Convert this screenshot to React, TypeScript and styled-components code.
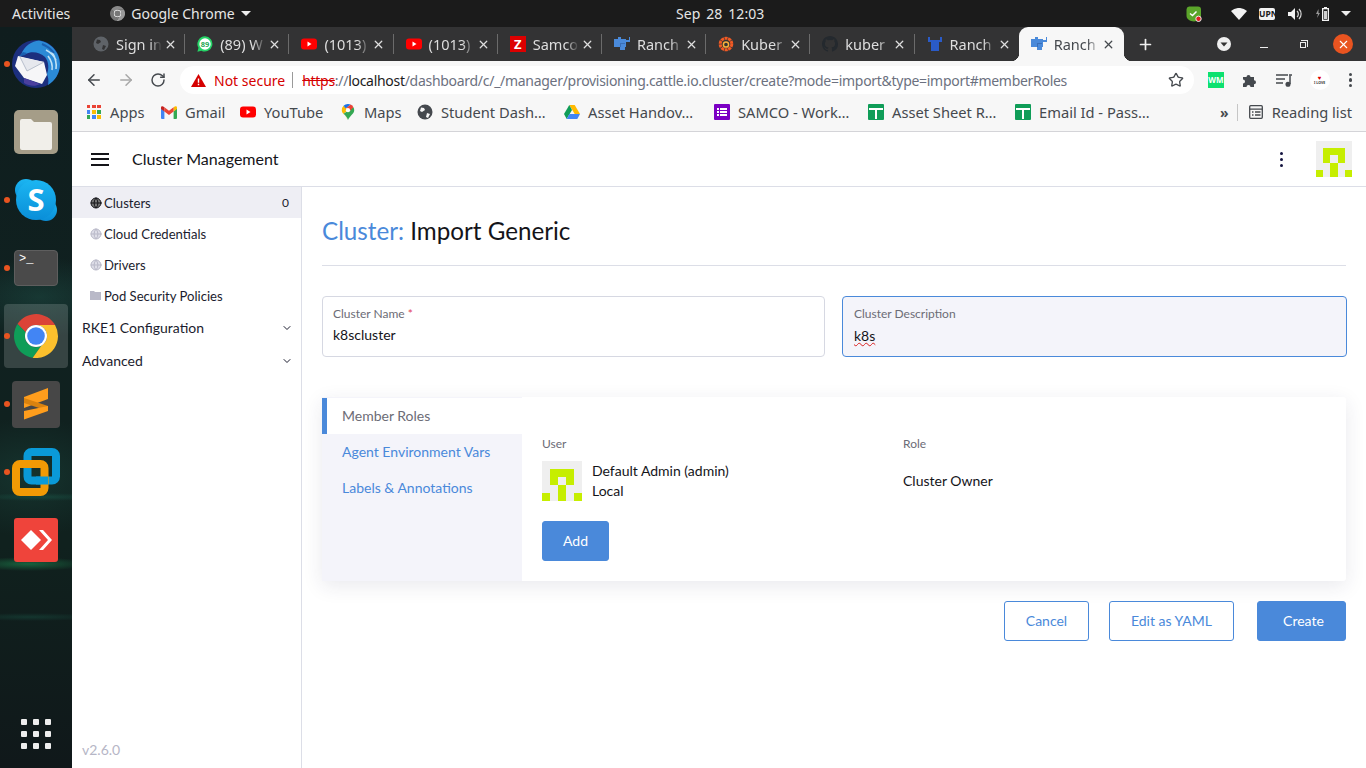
import React from "react";
import styled, { createGlobalStyle } from "styled-components";
import { ArrowLeft, ArrowRight, RotateCw, Star, X, Plus, ChevronDown, Globe } from "lucide-react";

const UI = `"Noto Sans", "Open Sans", sans-serif`;
const APP = `Lato, "Noto Sans", sans-serif`;
const BLUE = "#4a89da";

const Global = createGlobalStyle`
  html, body { margin: 0; padding: 0; width: 1366px; height: 768px; overflow: hidden; background: #fff; }
  * { box-sizing: border-box; }
`;

const Screen = styled.div`
  width: 1366px; height: 768px; display: flex; flex-direction: column; overflow: hidden; font-family: ${UI};
`;
const TopBar = styled.header`
  height: 27px; flex: none; background: #1b1b1b; color: #e6e6e6; display: grid;
  grid-template-columns: 664px auto 1fr; align-items: center; font-size: 14px; padding: 0 15px 0 12px;
`;
const TopLeft = styled.div`display: flex; align-items: center;`;
const AppName = styled.div`display: flex; align-items: center; gap: 6px; margin-left: 40px;`;
const Caret = styled.span`
  width: 0; height: 0; border-left: 5px solid transparent; border-right: 5px solid transparent; border-top: 5px solid #eee;
`;
const Clock = styled.div`word-spacing: 2px; letter-spacing: .1px;`;
const TopRight = styled.div`display: flex; justify-content: flex-end; align-items: center; gap: 13px;`;
const ShieldWrap = styled.span`display: flex; margin-right: 16px;`;
const Vpn = styled.span`
  background: #f2f2f2; color: #1b1b1b; border-radius: 2px; font: 700 8.5px/12px ${UI}; width: 16px; text-align: center; height: 12px; display: block; margin-left: -1px;
`;
const LastCaret = styled.span`display: flex; margin-left: -2px;`;

const Body = styled.div`flex: 1; display: flex; min-height: 0;`;
const Dock = styled.nav`
  width: 72px; flex: none; position: relative; padding-top: 3px; display: flex; flex-direction: column;
  background:
    radial-gradient(ellipse 60px 7px at 28px 537px, rgba(28,125,75,.7), transparent),
    radial-gradient(ellipse 70px 4px at 40px 470px, rgba(30,110,90,.35), transparent),
    radial-gradient(ellipse 70px 4px at 30px 590px, rgba(30,110,90,.3), transparent),
    radial-gradient(ellipse 90px 40px at 40px 270px, rgba(34,90,80,.4), transparent),
    radial-gradient(ellipse 90px 60px at 30px 450px, rgba(30,80,70,.4), transparent),
    linear-gradient(180deg, #0f1d1e 0%, #102120 40%, #10211e 70%, #10181a 100%);
`;
const Slot = styled.div<{ $active?: boolean; $dot?: boolean }>`
  height: 68px; flex: none; display: flex; align-items: center; justify-content: center; position: relative;
  ${p => p.$active ? `&::before { content: ""; position: absolute; left: 4px; top: 2px; width: 64px; height: 64px; border-radius: 4px; background: rgba(255,255,255,.16);} ` : ""}
  ${p => p.$dot ? `&::after { content: ""; position: absolute; left: 4px; top: 31px; width: 6px; height: 6px; border-radius: 50%; background: #e95420;} ` : ""}
  svg, div { position: relative; }
`;
const Terminal = styled.div`
  width: 44px; height: 36px; border-radius: 4px; background: #4a4a4a; border: 1px solid #5e5e5e; color: #fff;
  font: 400 12px/12px "Liberation Mono", monospace; padding: 2px 0 0 4px;
`;
const Grid9 = styled.div`
  position: absolute; left: 21px; bottom: 19px; width: 30px; display: grid; grid-template-columns: repeat(3, 6px); gap: 6px;
  i { width: 6px; height: 6px; background: #eee; border-radius: 1px; display: block; }
`;

const Browser = styled.div`flex: 1; min-width: 0; display: flex; flex-direction: column;`;
const TabStrip = styled.div`
  height: 34px; flex: none; background: #333334; padding: 0 0 0 9px; display: flex; align-items: stretch; color: #dedede;
`;
const Tab = styled.div<{ $active?: boolean; $last?: boolean }>`
  width: 104.2px; flex: none; display: flex; align-items: center; padding: 0 0 0 12px; position: relative; font-size: 14.5px;
  ${p => p.$active ? `
    background: #f7f7f7; color: #45494e; border-radius: 9px 9px 0 0; width: 105px;
    &::before, &::after { content: ""; position: absolute; bottom: 0; width: 8px; height: 8px; }
    &::before { left: -8px; background: radial-gradient(circle at 0 0, transparent 8px, #f7f7f7 8.5px); }
    &::after { right: -8px; background: radial-gradient(circle at 100% 0, transparent 8px, #f7f7f7 8.5px); }
  ` : p.$last ? "" : `
    &::after { content: ""; position: absolute; right: 0; top: 7px; height: 20px; width: 1px; background: #6b6b6b; }
  `}
`;
const TabTitle = styled.span`
  width: 46px; margin-left: 7px; overflow: hidden; white-space: nowrap; flex: none;
  -webkit-mask-image: linear-gradient(90deg, #000 72%, transparent 100%); mask-image: linear-gradient(90deg, #000 72%, transparent 100%);
`;
const TabClose = styled.span`margin-left: 2px; display: flex;`;
const StripRight = styled.div`flex: 1; display: flex; align-items: center; padding-left: 13px; color: #f0f0f0;`;
const WinBtns = styled.div`margin-left: auto; display: flex; align-items: center; padding-right: 3px;`;
const WinSlot = styled.span`width: 39.700px; display: flex; align-items: center; justify-content: center;`;
const CloseWin = styled.span`
  width: 20px; height: 20px; border-radius: 50%; background: #e95420; display: flex; align-items: center; justify-content: center; color: #fff;
`;
const Minimize = styled.span`width: 8px; height: 1px; background: #eee; display: block; margin-top: 7px;`;
const Restore = styled.span`
  width: 6px; height: 6px; border: 1px solid #eee; display: block; position: relative; margin-top: 2px;
  &::before { content: ""; position: absolute; right: -3px; top: -3px; width: 6px; height: 6px; border-top: 1px solid #eee; border-right: 1px solid #eee; }
`;

const Toolbar = styled.div`
  height: 37px; flex: none; background: #f7f7f7; display: flex; align-items: center; padding: 1px 0 0 12px; color: #45494e;
`;
const NavBtn = styled.span<{ $off?: boolean }>`
  width: 20px; margin-right: 12px; display: flex; justify-content: center; color: ${p => p.$off ? "#a8a8a8" : "#45494e"};
`;
const Omni = styled.div`
  width: 1014px; height: 28px; flex: none; background: #fff; border-radius: 14px; display: flex; align-items: center;
  padding: 0 10px 0 11px; font-size: 14px; white-space: nowrap;
`;
const NotSecure = styled.span`color: #d50000; margin-left: 8px;`;
const Divider = styled.span`width: 1px; height: 16px; background: #9a9a9a; margin: 0 9px 0 7px; flex: none;`;
const Url = styled.span`color: #6c7180; flex: 1; overflow: hidden; letter-spacing: -.29px;`;
const Strike = styled.span`color: #d50000; text-decoration: line-through;`;
const Host = styled.span`color: #1c1c1c;`;
const Tools = styled.div`
  flex: 1; display: flex; align-items: center; justify-content: space-between; padding: 0 13px 0 14px;
`;
const Wm = styled.span`
  width: 16px; height: 16px; background: #0de16f; color: #fff; font: 700 8px/16px ${UI}; text-align: center; display: block;
`;
const Badge = styled.span`
  width: 20px; height: 20px; background: #fff; border-radius: 50%; color: #333; display: flex; flex-direction: column; align-items: center; justify-content: center; font: 700 3.5px/4px ${UI};
`;
const Heart = styled.span`color: #d00; font-size: 6px; line-height: 6px;`;
const Dots = styled.span`
  display: flex; flex-direction: column; gap: 2px; padding: 0 1px;
  i { width: 3.5px; height: 3.5px; background: #45494e; border-radius: 50%; display: block; }
`;

const Bookmarks = styled.div`
  height: 34px; flex: none; background: #f7f7f7; border-bottom: 1px solid #d4d4d8; display: flex; align-items: center; font-size: 14.7px; color: #45494e; padding: 0 14px 5px 14px; white-space: nowrap;
`;
const Mark = styled.span<{ $w: number }>`
  width: ${p => p.$w}px; flex: none; display: flex; align-items: center; gap: 8px;
`;
const MarkIcon = styled.span`width: 16px; height: 16px; flex: none; display: flex; align-items: center; justify-content: center;`;
const MarksRight = styled.div`margin-left: auto; display: flex; align-items: center;`;
const Chevrons = styled.span`font-size: 14px; font-weight: 700; margin-right: 8px;`;
const MarkSep = styled.span`width: 1px; height: 17px; background: #c6c6c6; margin-right: 10px;`;
const MarkLabel = styled.span`margin-left: 8px;`;

const Rancher = styled.div`flex: 1; min-height: 0; display: flex; flex-direction: column; background: #fff; font-family: ${APP}; color: #141419;`;
const AppHeader = styled.div`
  height: 55px; flex: none; border-bottom: 1px solid #dcdee7; display: flex; align-items: center; padding: 0 14px 0 19px;
`;
const Burger = styled.span`
  width: 18px; display: flex; flex-direction: column; gap: 3.5px;
  i { height: 2px; background: #141419; display: block; }
`;
const AppTitle = styled.div`font-size: 16.050px; margin: 0 0 2px 23px;`;
const HeadRight = styled.div`margin-left: auto; display: flex; align-items: center; gap: 33px;`;
const Kebab = styled.span`
  display: flex; flex-direction: column; gap: 3px;
  i { width: 3px; height: 3px; background: #141440; border-radius: 50%; display: block; }
`;
const Columns = styled.div`flex: 1; min-height: 0; display: flex;`;
const Side = styled.aside`
  width: 230px; flex: none; border-right: 1px solid #dcdee7; display: flex; flex-direction: column; font-size: 14px;
`;
const NavRow = styled.div<{ $active?: boolean }>`
  height: 31px; flex: none; display: flex; align-items: center; padding: 0 12px 0 18px; font-size: 13.100px;
  background: ${p => p.$active ? "#eeeef4" : "transparent"}; color: #1b1c2e;
`;
const NavIcon = styled.span`width: 14px; display: flex; flex: none;`;
const Count = styled.span`margin-left: auto; font-size: 12px;`;
const Group = styled.div`
  height: 33px; flex: none; display: flex; align-items: center; justify-content: space-between; padding: 0 8px 0 10px; font-size: 14px; color: #1b1c2e;
`;
const Version = styled.div`margin-top: auto; padding: 0 0 10px 10px; color: #b6b6c6; font-size: 14px;`;

const Main = styled.main`flex: 1; min-width: 0; padding: 20px 20px 0;`;
const TitleBar = styled.div`height: 59px; border-bottom: 1px solid #dcdee7; padding-top: 9px;`;
const H1 = styled.h1`
  margin: 0; font: 400 24.200px/30px ${APP}; color: #141419;
  span { color: ${BLUE}; }
`;
const Fields = styled.div`display: grid; grid-template-columns: 503px 505px; gap: 17px; margin: 30px 0 40px; width: 1025px;`;
const Field = styled.div<{ $focus?: boolean }>`
  height: 61px; border: 1px solid ${p => p.$focus ? BLUE : "#d6d8e2"}; border-radius: 4px; padding: 9px 10px 0 ${p => p.$focus ? 11 : 10}px;
  background: ${p => p.$focus ? "#f4f4fa" : "#fff"};
`;
const FieldLabel = styled.label`
  display: block; font-size: 12px; line-height: 16px; color: #6c6c76;
  em { color: #e2425a; font-style: normal; }
`;
const FieldValue = styled.div<{ $focus?: boolean }>`font-size: 14px; line-height: 18px; margin-top: ${p => p.$focus ? 5 : 4}px; color: #141419;`;
const Squiggle = styled.span`text-decoration: underline wavy #d92020 1px; text-underline-offset: 1px;`;

const Panel = styled.section`
  height: 184px; display: flex; box-shadow: 0 5px 20px rgba(40,40,80,.10); border-radius: 3px; background: #fff;
`;
const SideTabs = styled.div`width: 200px; flex: none; background: #f4f4fa; padding-top: 1px; font-size: 14px;`;
const SideTab = styled.div<{ $active?: boolean }>`
  height: 36px; display: flex; align-items: center; padding-bottom: 2px;
  padding-left: ${p => p.$active ? "15px" : "20px"};
  border-left: ${p => p.$active ? `5px solid ${BLUE}` : "none"};
  background: ${p => p.$active ? "#fff" : "transparent"};
  color: ${p => p.$active ? "#6c6c76" : BLUE};
`;
const PanelBody = styled.div`flex: 1; min-width: 0; padding: 40px 20px 20px;`;
const RoleGrid = styled.div`display: grid; grid-template-columns: 361px 1fr; align-items: center;`;
const ColHead = styled.div`font-size: 12px; line-height: 14px; color: #6c6c76; margin-bottom: 10px;`;
const UserCell = styled.div`display: flex; align-items: center; gap: 10px; font-size: 14px; line-height: 20px;`;
const RoleCell = styled.div`font-size: 14px; padding-bottom: 2px;`;
const Btn = styled.button<{ $solid?: boolean; $w?: number; $nudge?: number }>`
  height: 40px; border-radius: 3px; font: 400 14px ${APP}; width: ${p => p.$w}px; padding: 0 0 2px ${p => p.$nudge ?? 0}px; cursor: pointer;
  border: 1px solid ${BLUE}; background: ${p => p.$solid ? BLUE : "#fff"}; color: ${p => p.$solid ? "#fff" : BLUE};
`;
const AddBtn = styled(Btn)`margin-top: 20px; display: block;`;
const Footer = styled.div`display: flex; justify-content: flex-end; margin-top: 20px;`;
const FootGap = styled.span<{ $w: number }>`width: ${p => p.$w}px; flex: none;`;

const Identicon = ({ size }: { size: number }) => (
  <svg width={size} height={size} viewBox="0 0 5 5" shapeRendering="crispEdges">
    <rect width="5" height="5" fill="#efefef" />
    <path d="M1 1h3v2H3V2H2v1H1z M2 3h1v2H2z M0 4h1v1H0z M4 4h1v1H4z" fill="#c6ee00" />
  </svg>
);

const RancherFav = () => (
  <svg width="16" height="16" viewBox="0 0 16 16" shapeRendering="crispEdges">
    <path d="M0 3h4V1h3v2h5v8H11v3H6v-3H0z" fill="#4a8ada" />
    <path d="M12 4h3V1h1v5h-4z" fill="#4a8ada" />
    <path d="M6 7h5v1H6zM6 8h1v3H6z" fill="#3a6fb8" />
  </svg>
);
const DarkRancher = () => (
  <svg width="16" height="16" viewBox="0 0 16 16">
    <path d="M1 1h2v3h10V1h2v5h-3v9H4V6H1z" fill="#2a5bc8" />
  </svg>
);
const Wa = () => (
  <svg width="16" height="16" viewBox="0 0 16 16">
    <path d="M8 .3a7.600 7.600 0 0 0-6.500 11.500L.4 15.700l4-1A7.600 7.600 0 1 0 8 .3z" fill="#25d366" />
    <circle cx="8" cy="8" r="5.700" fill="#fff" />
    <text x="8" y="10.600" textAnchor="middle" fontSize="7.500" fontWeight="700" fill="#1fa855" fontFamily="Noto Sans">89</text>
  </svg>
);
const Yt = () => (
  <svg width="16" height="12" viewBox="0 0 16 12">
    <rect width="16" height="11" y=".5" rx="3" fill="#f00" />
    <path d="M6.500 3.500l4 2.500-4 2.500z" fill="#fff" />
  </svg>
);
const Zed = styled.span`
  width: 16px; height: 16px; background: #d00; color: #fff; font: 700 13px/16px ${UI}; text-align: center; display: block; flex: none;
`;
const Grafana = () => (
  <svg width="16" height="16" viewBox="0 0 16 16">
    <circle cx="8" cy="8" r="5.800" fill="none" stroke="#f15a24" strokeWidth="3" strokeDasharray="3 .6" />
    <circle cx="8" cy="8.500" r="2.600" fill="none" stroke="#fbb03b" strokeWidth="1.500" />
  </svg>
);
const GitHub = () => (
  <svg width="16" height="16" viewBox="0 0 16 16">
    <path fill="#24292e" d="M8 0C3.580 0 0 3.580 0 8c0 3.540 2.290 6.530 5.470 7.590.4.070.55-.17.55-.38v-1.340c-2.230.48-2.700-1.070-2.700-1.070-.36-.93-.89-1.170-.89-1.170-.73-.5.050-.49.050-.49.8.060 1.230.83 1.230.83.710 1.220 1.870.87 2.330.66.070-.52.28-.87.5-1.070-1.780-.2-3.640-.89-3.640-3.950 0-.87.31-1.590.82-2.150-.08-.2-.36-1.020.08-2.120 0 0 .67-.21 2.200.82a7.600 7.600 0 0 1 4 0c1.530-1.040 2.200-.82 2.200-.82.44 1.100.16 1.920.08 2.120.51.56.82 1.270.82 2.150 0 3.070-1.870 3.750-3.650 3.950.29.25.54.73.54 1.480v2.200c0 .21.15.46.55.38A8 8 0 0 0 16 8c0-4.420-3.580-8-8-8z" />
  </svg>
);
const GlobeFav = ({ c = "#5f6368", bg = "#333334" }: { c?: string; bg?: string }) => (
  <svg width="16" height="16" viewBox="0 0 16 16">
    <circle cx="8" cy="8" r="7.500" fill={c} />
    <path d="M4 3.500l3 .5 1 2-3 2-2-1zM10 9l3 1-2 4-2-1z" fill={bg} />
  </svg>
);
const Apps = () => (
  <svg width="14" height="14" viewBox="0 0 14 14" shapeRendering="crispEdges">
    {["#ea4335","#ea4335","#ea4335","#4285f4","#fbbc04","#34a853","#34a853","#4285f4","#fbbc04"].map((c, i) => (
      <rect key={i} x={(i % 3) * 5.200} y={Math.floor(i / 3) * 5.200} width="3.400" height="3.400" fill={c} />
    ))}
  </svg>
);
const Gmail = () => (
  <svg width="16" height="13" viewBox="0 0 16 13">
    <path d="M0 2v10a1 1 0 0 0 1 1h2.400V5.500z" fill="#4285f4" />
    <path d="M16 2v10a1 1 0 0 1-1 1h-2.400V5.500z" fill="#34a853" />
    <path d="M12.600 1.200V5.600L16 3V1.500A1.400 1.400 0 0 0 13.800.4z" fill="#fbbc04" />
    <path d="M3.400 5.600V1.200L8 4.700l4.600-3.500v4.400L8 9z" fill="#ea4335" />
    <path d="M3.400 1.200V5.600L0 3V1.500A1.400 1.400 0 0 1 2.200.4z" fill="#c5221f" />
  </svg>
);
const MapsPin = () => (
  <svg width="14" height="16" viewBox="0 0 14 18">
    <path d="M7 18C5 13 0 11 0 7a7 7 0 0 1 2-5l5 5-5 4z" fill="#fbbc04" />
    <path d="M7 18c2-5 7-7 7-11a7 7 0 0 0-.9-3.400L2 11c2 2 4 4 5 7z" fill="#34a853" />
    <path d="M2 2a7 7 0 0 1 5-2 7 7 0 0 1 3 .7L4.500 5z" fill="#1a73e8" />
    <path d="M10 .7A7 7 0 0 1 13.100 3.600L9 8 5 4.500z" fill="#ea4335" />
    <circle cx="7" cy="7" r="2.400" fill="#fff" />
  </svg>
);
const Drive = () => (
  <svg width="16" height="14" viewBox="0 0 16 14">
    <path d="M5.300 0h5.400l5.300 9h-5.300z" fill="#ffba00" />
    <path d="M5.300 0L0 9l2.700 5 5.300-9z" fill="#0f9d58" />
    <path d="M2.700 14h10.600L16 9H5.400z" fill="#4285f4" />
  </svg>
);
const FormIcon = () => (
  <svg width="16" height="16" viewBox="0 0 16 16">
    <rect width="16" height="16" rx="1" fill="#7b00c4" />
    <path d="M3 4h2v2H3zM3 7h2v2H3zM3 10h2v2H3zM6 4h7v2H6zM6 7h7v2H6zM6 10h7v2H6z" fill="#fff" />
  </svg>
);
const SheetIcon = () => (
  <svg width="16" height="16" viewBox="0 0 16 16">
    <rect width="16" height="16" rx="1" fill="#0f9d58" />
    <path d="M1 4h14v2H9v9H7V6H1z" fill="#fff" />
  </svg>
);
const ReadingIcon = () => (
  <svg width="14" height="14" viewBox="0 0 14 14" fill="none" stroke="#45494e" strokeWidth="1.300">
    <rect x=".7" y=".7" width="12.600" height="12.600" rx="1" />
    <path d="M.7 4.200h12.600M3 7h1.500M6 7h5.500M3 10h1.500M6 10h5.500" />
  </svg>
);
const Alert = () => (
  <svg width="15" height="13" viewBox="0 0 15 13">
    <path d="M7.500 0L15 13H0z" fill="#d50000" />
    <path d="M6.800 4.500h1.400v4.200H6.800zM6.800 9.800h1.400v1.400H6.800z" fill="#fff" />
  </svg>
);
const Puzzle = () => (
  <svg width="16" height="16" viewBox="0 0 16 16">
    <path fill="#45494e" d="M1 5h3.500a2 2 0 1 1 4 0H12v3.200a2 2 0 1 1 0 4V15H8.500a2 2 0 1 0-4 0H1v-3.500a2 2 0 1 0 0-4z" />
  </svg>
);
const Queue = () => (
  <svg width="16" height="14" viewBox="0 0 16 14" fill="none" stroke="#45494e" strokeWidth="1.500">
    <path d="M0 2h12M0 6h9M0 10h7" />
    <path d="M14 2.500V11" />
    <circle cx="12" cy="11.300" r="1.800" fill="#45494e" />
    <path d="M13 2h3" />
  </svg>
);
const ShieldOk = () => (
  <svg width="16" height="16" viewBox="0 0 16 16">
    <path d="M3 .5h9a3 3 0 0 1 3 3v6c0 3-3 5.500-7 6-4-.5-7.500-2-7.500-6v-6A3 3 0 0 1 3 .5z" fill="#5ba52a" />
    <path d="M4 7.500l2.500 2L10.500 5.500" stroke="#fff" strokeWidth="1.500" fill="none" />
    <circle cx="12.500" cy="12.800" r="2.700" fill="#e02020" stroke="#eee" strokeWidth="1" />
  </svg>
);
const Wifi = () => (
  <svg width="16" height="12" viewBox="0 0 16 12">
    <path d="M8 12L0 3a12 12 0 0 1 16 0z" fill="#f2f2f2" />
  </svg>
);
const Speaker = () => (
  <svg width="15" height="14" viewBox="0 0 15 14" fill="none">
    <path d="M0 5h3l4-4v12L3 9H0z" fill="#f2f2f2" />
    <path d="M9 4a4 4 0 0 1 0 6M11 2a7 7 0 0 1 0 10" stroke="#d8d8d8" strokeWidth="1.200" />
  </svg>
);
const Battery = () => (
  <svg width="14" height="15" viewBox="0 0 14 15">
    <path d="M2.500 3L0 8h2l-1 4 3-5H2.500z" fill="#9a9a9a" />
    <path d="M8 1h3v1h2v13H6V2h2z" fill="#f2f2f2" />
    <rect x="7.300" y="3.300" width="4.400" height="10.400" fill="#1b1b1b" />
    <rect x="8" y="5" width="3" height="8" fill="#cfcfcf" />
  </svg>
);
const ChromeLogo = ({ size, mono }: { size: number; mono?: boolean }) => (
  <svg width={size} height={size} viewBox="4 4 40 40">
    <path d="M7.200 13.200A20 20 0 0 1 41.300 14H24a10 10 0 0 0-9.400 6.600Z" fill={mono ? "#8a8a8a" : "#db4437"} />
    <path d="M7.200 13.200A20 20 0 0 0 21 43.800L29 32.700A10 10 0 0 1 14.600 20.600Z" fill={mono ? "#777" : "#0f9d58"} />
    <path d="M41.300 14A20 20 0 0 1 21 43.800L29 32.700A10 10 0 0 0 24 14Z" fill={mono ? "#9a9a9a" : "#fbc02d"} />
    <circle cx="24" cy="24" r="10" fill="#fff" />
    <circle cx="24" cy="24" r="8" fill={mono ? "#777" : "#4285f4"} />
  </svg>
);
const Thunderbird = () => (
  <svg width="48" height="48" viewBox="0 0 48 48">
    <circle cx="24" cy="24" r="24" fill="#1c2f7e" />
    <path d="M9 15C12 6 20 1 27 .5 38 2 48 12 48 24c0 9-5 17-12 21 1-5 0-8-1-11 2-5 2-12-2-17-5-5-14-6-19-3z" fill="#2b8ad6" />
    <path d="M36 16c3 4 5 8 4 14M40 12c3 5 5 10 4 17M34 10c4 2 8 6 10 10" stroke="#bfe2f7" strokeWidth="1.600" fill="none" />
    <path d="M30 4c5 2 9 5 12 9" stroke="#1a5fb0" strokeWidth="2" fill="none" />
    <path d="M6 17l5-5 4 1L13 15z" fill="#1a5fb0" />
    <path d="M6 16l26 6 3 13-5 9-18-6-9-12z" fill="#f6f6f8" />
    <path d="M8 17l7 14 17-9" fill="#e6e8ee" stroke="#a9b2c2" strokeWidth=".8" />
    <path d="M12 38l16 6c-5 3-11 2-16-1z" fill="#4a3f9e" />
  </svg>
);
const Files = () => (
  <svg width="44" height="44" viewBox="0 0 44 44">
    <rect width="44" height="44" rx="5" fill="#a59d88" />
    <path d="M6 11a2 2 0 0 1 2-2h9l3 3h16a2 2 0 0 1 2 2v24a2 2 0 0 1-2 2H8a2 2 0 0 1-2-2z" fill="#f1efea" />
  </svg>
);
const Skype = () => (
  <svg width="44" height="44" viewBox="0 0 44 44">
    <defs>
      <linearGradient id="sk" x1="0" y1="0" x2="0" y2="1">
        <stop offset="0" stopColor="#1bb6f2" />
        <stop offset="1" stopColor="#0a8ed8" />
      </linearGradient>
    </defs>
    <circle cx="12" cy="12" r="11" fill="url(#sk)" />
    <circle cx="32" cy="32" r="11" fill="url(#sk)" />
    <circle cx="22" cy="22" r="20" fill="url(#sk)" />
    <text x="22" y="33" textAnchor="middle" fontSize="31" fontWeight="700" fill="#fff" fontFamily="Noto Sans">S</text>
  </svg>
);
const Sublime = () => (
  <svg width="48" height="47" viewBox="0 0 48 47">
    <rect width="48" height="47" rx="4" fill="#474747" />
    <path d="M12 16L36 7v11L12 27z" fill="#ff9d1c" />
    <path d="M12 17l24 8v5L12 22z" fill="#d9820f" />
    <path d="M12 30l24-5v5L12 38.500z" fill="#ff9d1c" />
  </svg>
);
const Vmware = () => (
  <svg width="48" height="48" viewBox="0 0 48 48" fill="none" strokeWidth="8">
    <rect x="15.500" y="4" width="28.500" height="28.500" rx="4" stroke="#0a9ad8" />
    <rect x="4" y="16" width="28.500" height="28" rx="4" stroke="#f29a05" />
    <path d="M24 32.500h12" stroke="#0a9ad8" />
  </svg>
);
const AnyDesk = () => (
  <svg width="44" height="44" viewBox="0 0 44 44">
    <rect width="44" height="44" rx="3" fill="#ef443b" />
    <path d="M7 22l10-10 10 10-10 10z" fill="#fff" />
    <path d="M25 12h4l9 10-9 10h-4l9-10z" fill="#fff" />
  </svg>
);

const Hash = ({ dark }: { dark?: boolean }) => (
  <Globe size={12} color={dark ? "#141419" : "#b9b9c8"} fill={dark ? "#777" : "#dedee8"} strokeWidth={2} />
);
const Folder = () => (
  <svg width="11" height="9" viewBox="0 0 11 9"><path d="M0 0h4l1 1h6v8H0z" fill="#b9b9c8" /></svg>
);

const tabs: { icon: React.ReactNode; title: string }[] = [
  { icon: <GlobeFav />, title: "Sign in" },
  { icon: <Wa />, title: "(89) W" },
  { icon: <Yt />, title: "(1013)" },
  { icon: <Yt />, title: "(1013)" },
  { icon: <Zed>Z</Zed>, title: "Samco" },
  { icon: <RancherFav />, title: "Ranch" },
  { icon: <Grafana />, title: "Kuber" },
  { icon: <GitHub />, title: "kuber" },
  { icon: <DarkRancher />, title: "Ranch" },
];

const marks: { icon: React.ReactNode; label: string; w: number }[] = [
  { icon: <Apps />, label: "Apps", w: 75 },
  { icon: <Gmail />, label: "Gmail", w: 79 },
  { icon: <Yt />, label: "YouTube", w: 100 },
  { icon: <MapsPin />, label: "Maps", w: 77 },
  { icon: <GlobeFav c="#45494e" bg="#f7f7f7" />, label: "Student Dash…", w: 147 },
  { icon: <Drive />, label: "Asset Handov…", w: 150 },
  { icon: <FormIcon />, label: "SAMCO - Work…", w: 154 },
  { icon: <SheetIcon />, label: "Asset Sheet R…", w: 147 },
  { icon: <SheetIcon />, label: "Email Id - Pass…", w: 150 },
];

export default function App() {
  return (
    <Screen>
      <Global />
      <TopBar>
        <TopLeft>
          Activities
          <AppName>
            <ChromeLogo size={15} mono />
            Google Chrome
            <Caret />
          </AppName>
        </TopLeft>
        <Clock>Sep 28 12:03</Clock>
        <TopRight>
          <ShieldWrap><ShieldOk /></ShieldWrap>
          <Wifi />
          <Vpn>UPN</Vpn>
          <Speaker />
          <Battery />
          <LastCaret><Caret /></LastCaret>
        </TopRight>
      </TopBar>
      <Body>
        <Dock>
          <Slot $dot><Thunderbird /></Slot>
          <Slot><Files /></Slot>
          <Slot $dot><Skype /></Slot>
          <Slot $dot><Terminal>{">_"}</Terminal></Slot>
          <Slot $dot $active><ChromeLogo size={44} /></Slot>
          <Slot $dot><Sublime /></Slot>
          <Slot $dot><Vmware /></Slot>
          <Slot><AnyDesk /></Slot>
          <Grid9>{Array.from({ length: 9 }, (_, i) => <i key={i} />)}</Grid9>
        </Dock>
        <Browser>
          <TabStrip>
            {tabs.map((t, i) => (
              <Tab key={i} $last={i === tabs.length - 1}>
                <MarkIcon>{t.icon}</MarkIcon>
                <TabTitle>{t.title}</TabTitle>
                <TabClose><X size={13} strokeWidth={2.400} /></TabClose>
              </Tab>
            ))}
            <Tab $active>
              <MarkIcon><RancherFav /></MarkIcon>
              <TabTitle>Ranch</TabTitle>
              <TabClose><X size={13} strokeWidth={2.400} /></TabClose>
            </Tab>
            <StripRight>
              <Plus size={17} strokeWidth={2.400} />
              <WinBtns>
                <WinSlot>
                  <svg width="14" height="14" viewBox="0 0 14 14"><circle cx="7" cy="7" r="7" fill="#f0f0f0" /><path d="M3.500 5.500h7L7 9.500z" fill="#333" /></svg>
                </WinSlot>
                <WinSlot><Minimize /></WinSlot>
                <WinSlot><Restore /></WinSlot>
                <WinSlot><CloseWin><X size={13} strokeWidth={2} /></CloseWin></WinSlot>
              </WinBtns>
            </StripRight>
          </TabStrip>
          <Toolbar>
            <NavBtn><ArrowLeft size={18} strokeWidth={2} /></NavBtn>
            <NavBtn $off><ArrowRight size={18} strokeWidth={2} /></NavBtn>
            <NavBtn><RotateCw size={16} strokeWidth={2.200} /></NavBtn>
            <Omni>
              <Alert />
              <NotSecure>Not secure</NotSecure>
              <Divider />
              <Url>
                <Strike>https</Strike>://<Host>localhost</Host>/dashboard/c/_/manager/provisioning.cattle.io.cluster/create?mode=import&amp;type=import#memberRoles
              </Url>
              <Star size={16} strokeWidth={2} color="#45494e" />
            </Omni>
            <Tools>
              <Wm>WM</Wm>
              <Puzzle />
              <Queue />
              <Badge><Heart>♥</Heart>I LOVE</Badge>
              <Dots><i /><i /><i /></Dots>
            </Tools>
          </Toolbar>
          <Bookmarks>
            {marks.map(m => (
              <Mark key={m.label} $w={m.w}>
                <MarkIcon>{m.icon}</MarkIcon>
                {m.label}
              </Mark>
            ))}
            <MarksRight>
              <Chevrons>»</Chevrons>
              <MarkSep />
              <MarkIcon><ReadingIcon /></MarkIcon>
              <MarkLabel>Reading list</MarkLabel>
            </MarksRight>
          </Bookmarks>
          <Rancher>
            <AppHeader>
              <Burger><i /><i /><i /></Burger>
              <AppTitle>Cluster Management</AppTitle>
              <HeadRight>
                <Kebab><i /><i /><i /></Kebab>
                <Identicon size={36} />
              </HeadRight>
            </AppHeader>
            <Columns>
              <Side>
                <NavRow $active><NavIcon><Hash dark /></NavIcon>Clusters<Count>0</Count></NavRow>
                <NavRow><NavIcon><Hash /></NavIcon>Cloud Credentials</NavRow>
                <NavRow><NavIcon><Hash /></NavIcon>Drivers</NavRow>
                <NavRow><NavIcon><Folder /></NavIcon>Pod Security Policies</NavRow>
                <Group>RKE1 Configuration<ChevronDown size={12} strokeWidth={2} /></Group>
                <Group>Advanced<ChevronDown size={12} strokeWidth={2} /></Group>
                <Version>v2.6.0</Version>
              </Side>
              <Main>
                <TitleBar><H1><span>Cluster:</span> Import Generic</H1></TitleBar>
                <Fields>
                  <Field>
                    <FieldLabel>Cluster Name <em>*</em></FieldLabel>
                    <FieldValue>k8scluster</FieldValue>
                  </Field>
                  <Field $focus>
                    <FieldLabel>Cluster Description</FieldLabel>
                    <FieldValue $focus><Squiggle>k8s</Squiggle></FieldValue>
                  </Field>
                </Fields>
                <Panel>
                  <SideTabs>
                    <SideTab $active>Member Roles</SideTab>
                    <SideTab>Agent Environment Vars</SideTab>
                    <SideTab>Labels &amp; Annotations</SideTab>
                  </SideTabs>
                  <PanelBody>
                    <RoleGrid>
                      <ColHead>User</ColHead>
                      <ColHead>Role</ColHead>
                      <UserCell>
                        <Identicon size={40} />
                        <div>Default Admin (admin)<br />Local</div>
                      </UserCell>
                      <RoleCell>Cluster Owner</RoleCell>
                    </RoleGrid>
                    <AddBtn $solid $w={67}>Add</AddBtn>
                  </PanelBody>
                </Panel>
                <Footer>
                  <Btn $w={85}>Cancel</Btn>
                  <FootGap $w={20} />
                  <Btn $w={125}>Edit as YAML</Btn>
                  <FootGap $w={23} />
                  <Btn $solid $w={89} $nudge={4}>Create</Btn>
                </Footer>
              </Main>
            </Columns>
          </Rancher>
        </Browser>
      </Body>
    </Screen>
  );
}
